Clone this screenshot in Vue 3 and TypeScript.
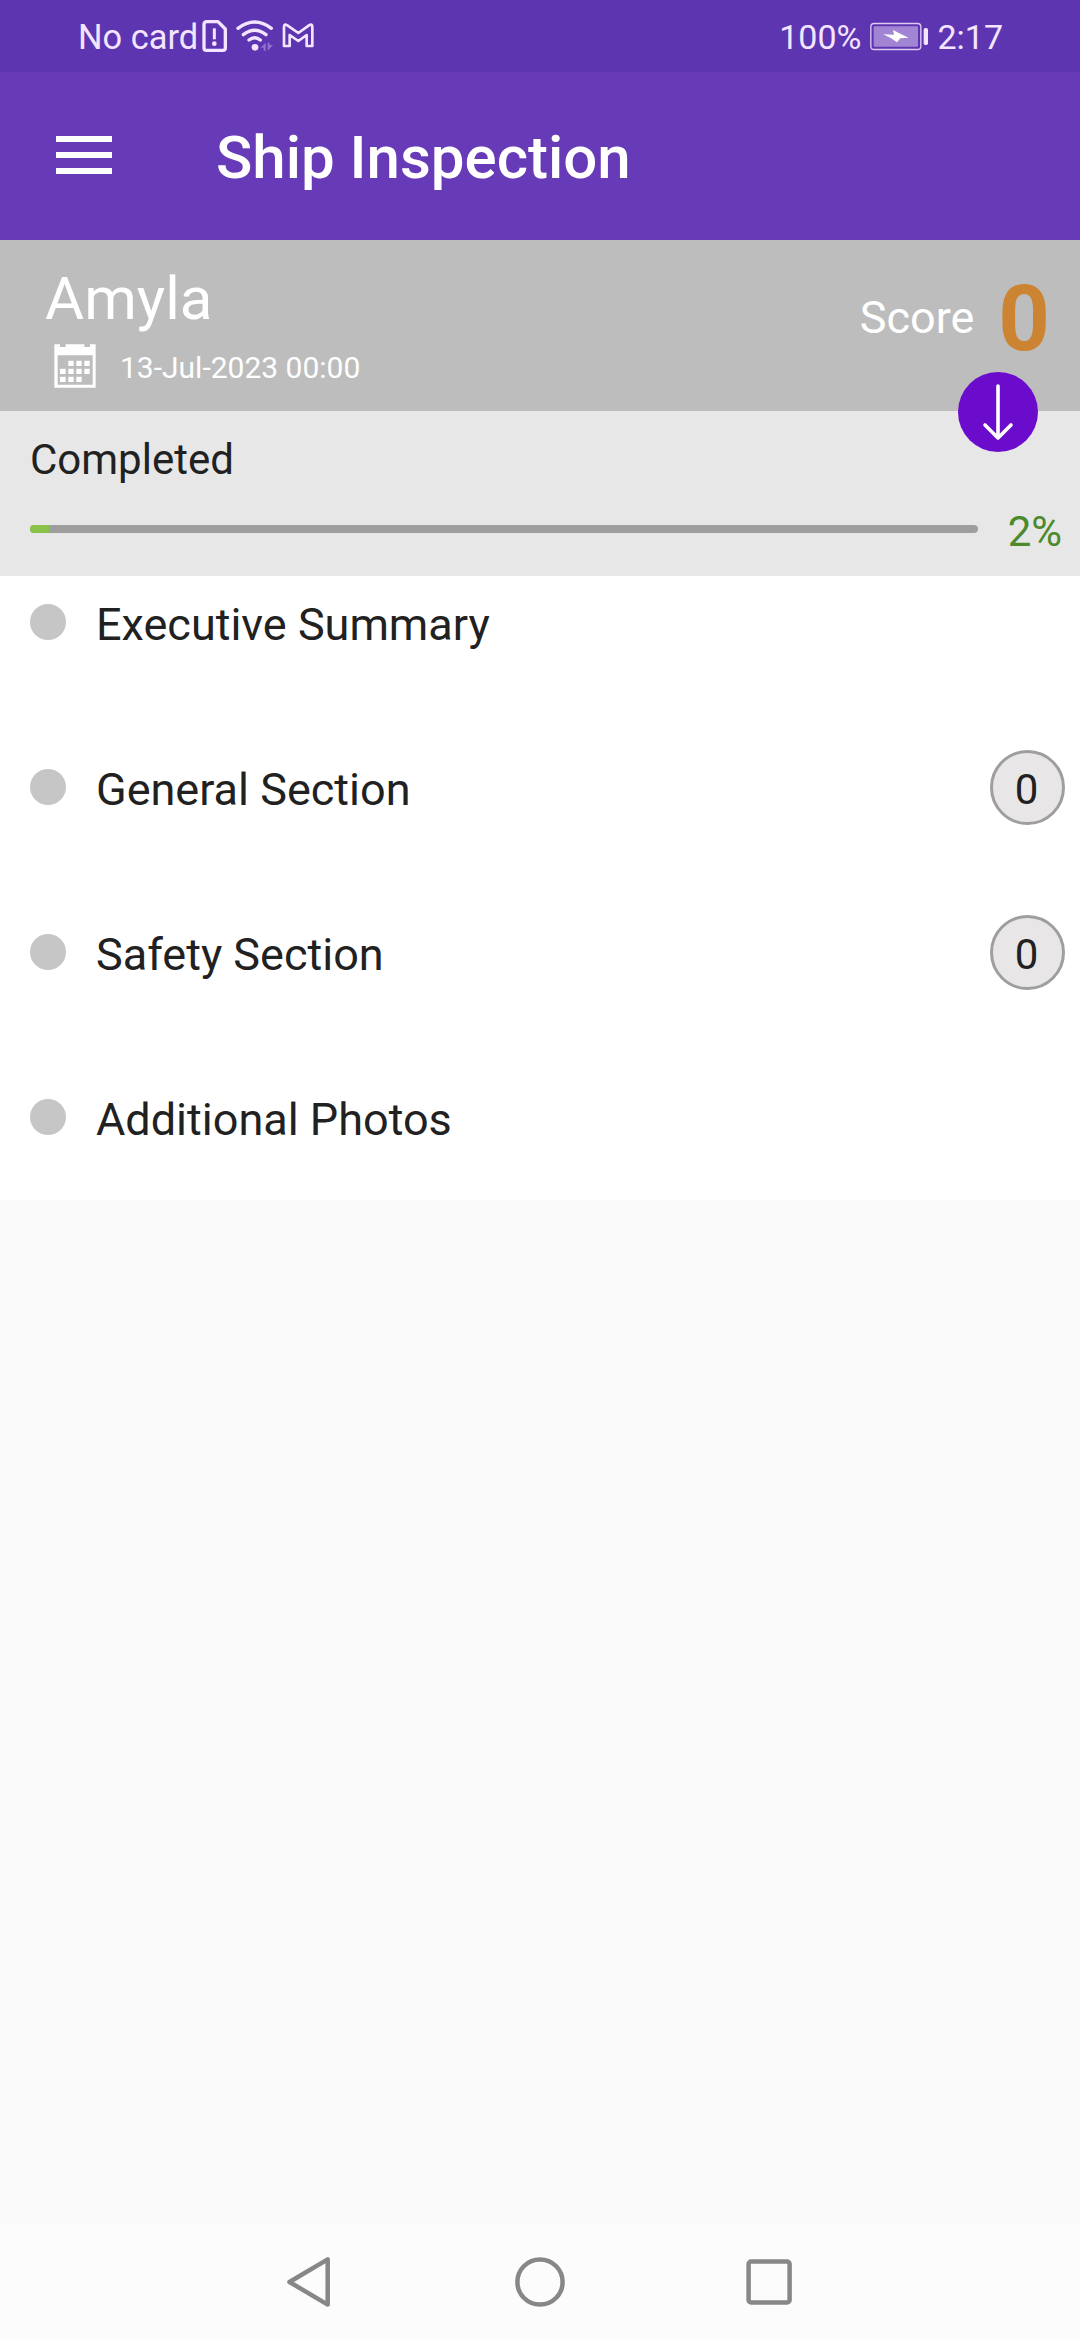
<script setup lang="ts">
interface Section {
  title: string
  score?: number
}

const sections: Section[] = [
  { title: 'Executive Summary' },
  { title: 'General Section', score: 0 },
  { title: 'Safety Section', score: 0 },
  { title: 'Additional Photos' },
]

const progress = 2
</script>

<template>
  <div class="screen">
    <div class="status">
      <span class="carrier">No card</span>
      <svg class="sim" viewBox="423 50 84 114" width="28" height="38">
        <path d="M441 64H474L496 86V143Q496 150 489 150H439Q432 150 432 143V73Q432 64 441 64Z" fill="none" stroke="currentColor" stroke-width="10" stroke-linejoin="round" />
        <path d="M463 84V117" stroke="currentColor" stroke-width="9" />
        <circle cx="463" cy="130" r="7" fill="currentColor" />
      </svg>
      <svg class="wifi" viewBox="525 50 120 114" width="40" height="38">
        <g fill="none" stroke="currentColor" stroke-width="10" stroke-linecap="round">
          <path d="M534 84Q584 46 634 84" />
          <path d="M550 103Q584 77 618 103" />
          <path d="M567 119Q584 105 601 119" />
        </g>
        <circle cx="585" cy="141" r="10" fill="currentColor" />
        <path d="M602 142L617 127V151H611V142ZM623 127H629V134H639L623 151Z" fill="currentColor" opacity=".35" />
      </svg>
      <svg class="mail" viewBox="663 50 105 114" width="35" height="38">
        <path d="M672 137V80Q672 69 682 75L715 98L747 75Q757 69 757 80V137H740V104L715 122L689 104V137Z" fill="none" stroke="currentColor" stroke-width="8" stroke-linejoin="round" />
      </svg>
      <span class="charge">100%</span>
      <svg class="battery" viewBox="330 60 180 99" width="60" height="33">
        <rect x="335.500" y="70.500" width="150" height="78" rx="10" fill="none" stroke="currentColor" stroke-width="4" opacity=".85" />
        <rect x="344" y="79" width="133" height="61" rx="3" fill="currentColor" opacity=".45" />
        <path d="M402 90L427 103L449 113L424 115L414 127L394 113L372 103L405 104Z" fill="#fff" />
        <rect x="494" y="84" width="13" height="51" rx="5" fill="currentColor" />
      </svg>
      <span class="clock">2:17</span>
    </div>

    <header class="appbar">
      <div class="menu"><i></i><i></i><i></i></div>
      <h1>Ship Inspection</h1>
    </header>

    <section class="vessel">
      <div class="info">
        <div class="name">Amyla</div>
        <div class="when">
          <svg viewBox="162 342 126 132" width="42" height="44">
            <path fill="#fff" fill-rule="evenodd" d="M163 343H180V351H197V343H253V351H270V343H287V473H163ZM173 376V464H278V376Z" />
            <path fill="#fff" d="M205 392h16v16h-16zM229 392h16v16h-16zM253 392h16v16h-16zM180 416h17v16h-17zM205 416h16v16h-16zM229 416h16v16h-16zM253 416h16v16h-16zM180 440h17v16h-17zM205 440h16v16h-16zM229 440h16v16h-16z" />
          </svg>
          <span>13-Jul-2023 00:00</span>
        </div>
      </div>
      <div class="score-label">Score</div>
      <div class="score">0</div>
      <svg class="expand" viewBox="0 0 80 80" width="80" height="80">
        <circle cx="40" cy="40" r="40" fill="#6b0bcb" />
        <path d="M40 14V66M27 53L40 66L53 53" fill="none" stroke="#fff" stroke-width="3.600" stroke-linecap="round" stroke-linejoin="round" />
      </svg>
    </section>

    <section class="completion">
      <div class="caption">Completed</div>
      <div class="meter">
        <div class="track"><div class="fill" :style="{ width: progress + '%' }"></div></div>
        <span class="percent">{{ progress }}%</span>
      </div>
    </section>

    <main class="list">
      <div v-for="section in sections" :key="section.title" class="row">
        <span class="dot"></span>
        <span class="label">{{ section.title }}</span>
        <span v-if="section.score !== undefined" class="badge">{{ section.score }}</span>
      </div>
    </main>

    <div class="blank"></div>

    <nav class="navbar">
      <svg viewBox="0 0 50 54" width="50" height="54">
        <path d="M43.700 4.400V49.600L5.500 27Z" fill="none" stroke="#878787" stroke-width="4.500" stroke-linejoin="round" />
      </svg>
      <svg viewBox="0 0 54 54" width="54" height="54">
        <circle cx="27" cy="27" r="22.600" fill="none" stroke="#878787" stroke-width="4.500" />
      </svg>
      <svg viewBox="0 0 50 54" width="50" height="54">
        <rect x="2.600" y="6.500" width="41" height="41" rx="2.500" fill="none" stroke="#878787" stroke-width="4.500" />
      </svg>
    </nav>
  </div>
</template>

<style>
body {
  margin: 0;
}
</style>

<style scoped>
.screen {
  width: 1080px;
  height: 2340px;
  display: flex;
  flex-direction: column;
  background: #fafafa;
  color: #212121;
  font-family: Roboto, sans-serif;
  overflow: hidden;
  white-space: nowrap;
}

svg {
  display: block;
  flex: none;
}

.status {
  box-sizing: border-box;
  height: 72px;
  padding: 2px 77px 0 78px;
  display: flex;
  align-items: center;
  background: #5e35b1;
  color: #f3e5ff;
  font-size: 34px;
}

.carrier {
  width: 123px;
  font-size: 34.4px;
}

.sim,
.wifi,
.mail {
  margin-top: -3px;
}

.wifi {
  margin-left: 6px;
}

.mail {
  margin-left: 6px;
}

.charge {
  margin-left: auto;
}

.battery {
  margin-top: -1px;
  margin-left: 8px;
}

.clock {
  margin-left: 8px;
}

.appbar {
  height: 168px;
  display: flex;
  align-items: center;
  background: #673ab7;
  color: #fff;
}

.menu {
  width: 56px;
  margin: 0 104px 2px 56px;
  display: flex;
  flex-direction: column;
  gap: 10px;
}

.menu i {
  height: 6px;
  background: #fff;
}

h1 {
  margin: 0;
  padding-top: 3px;
  font-size: 60px;
  font-weight: 500;
}

.vessel {
  position: relative;
  box-sizing: border-box;
  height: 171px;
  padding: 24px 30px 0 45px;
  display: flex;
  align-items: flex-start;
  background: #bdbdbd;
  color: #fff;
}

.info {
  flex: 1;
}

.name {
  font-size: 60px;
  line-height: 70px;
}

.when {
  margin: 10px 0 0 9px;
  display: flex;
  gap: 24px;
  font-size: 30px;
  line-height: 47px;
}

.score-label {
  margin-top: 19px;
  font-size: 45px;
  line-height: 70px;
}

.score {
  margin: 6px 0 0 24px;
  color: #cd8432;
  font-size: 90px;
  font-weight: 700;
  line-height: 100px;
}

.expand {
  position: absolute;
  right: 42px;
  bottom: -41px;
}

.completion {
  box-sizing: border-box;
  height: 165px;
  padding: 24px 18px 0 30px;
  background: #e7e7e7;
  font-size: 42px;
}

.caption {
  line-height: 50px;
}

.meter {
  margin-top: 17px;
  display: flex;
  align-items: center;
  height: 54px;
  line-height: 50px;
}

.track {
  width: 948px;
  height: 8px;
  border-radius: 4px;
  background: #9e9e9e;
  overflow: hidden;
}

.fill {
  height: 8px;
  background: #8bc34a;
}

.percent {
  padding-top: 6px;
  margin-left: 30px;
  color: #4c8a2b;
}

.list {
  box-sizing: border-box;
  height: 624px;
  display: flex;
  flex-direction: column;
  gap: 73px;
  background: #fff;
}

.row {
  height: 92px;
  padding: 0 15px 0 30px;
  display: flex;
  align-items: center;
}

.dot {
  width: 36px;
  height: 36px;
  border-radius: 50%;
  background: #c6c6c7;
}

.label {
  flex: 1;
  padding-top: 5px;
  margin-left: 30px;
  font-size: 45px;
}

.badge {
  box-sizing: border-box;
  width: 75px;
  height: 75px;
  padding: 4px 2px 0 0;
  margin-top: 1px;
  border: 3px solid #9e9e9e;
  border-radius: 50%;
  background: #e8e6e6;
  font-size: 42px;
  line-height: 65px;
  text-align: center;
}

.blank {
  flex: 1;
}

.navbar {
  height: 116px;
  display: flex;
  align-items: center;
  justify-content: center;
  gap: 179px;
  background: #fcfcfc;
}
</style>
